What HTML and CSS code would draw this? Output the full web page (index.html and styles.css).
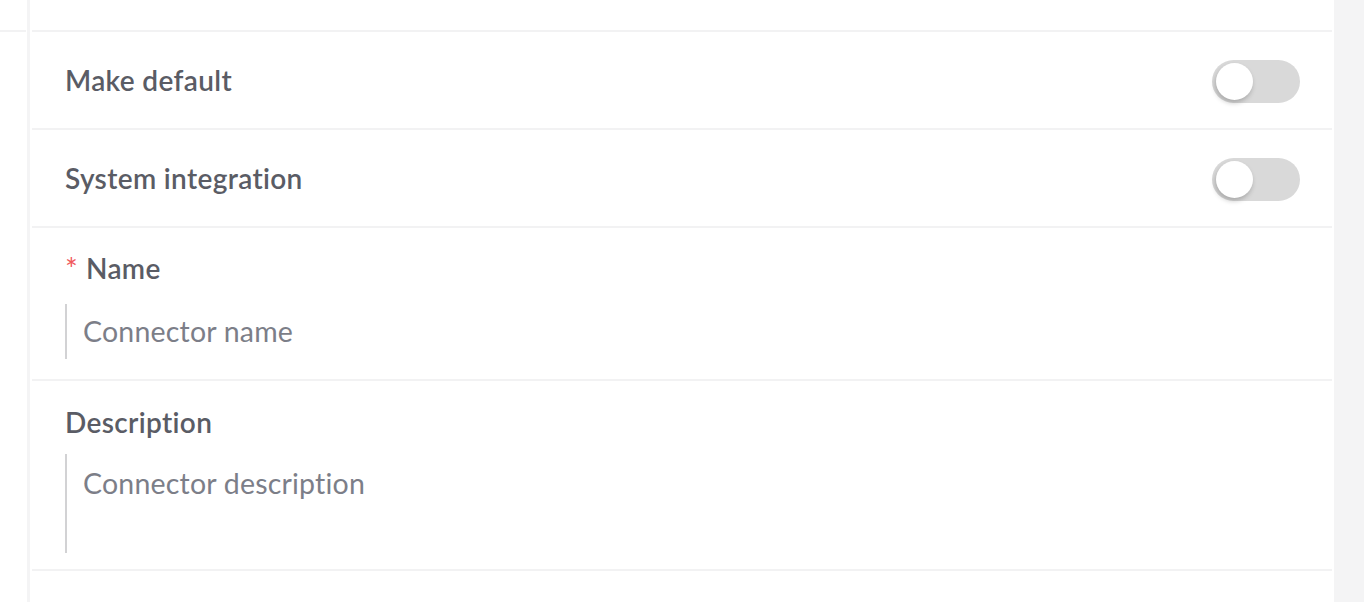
FILE: index.html
```html
<!DOCTYPE html>
<html lang="en">

<head>
    <meta charset="UTF-8">
    <meta name="viewport" content="width=device-width, initial-scale=1.0" />
    <title>Connector settings</title>
    <link rel="stylesheet" href="styles.css">
</head>

<body>
    <div class="layout">
        <!-- Narrow side panel on the left -->
        <div class="side">
            <div class="side-head"></div>
        </div>

        <!-- Connector form -->
        <div class="panel">
            <div class="panel-head"></div>

            <div class="row row-switch">
                <span class="row-label">Make default</span>
                <span class="toggle"><span class="knob"></span></span>
            </div>

            <div class="row row-switch">
                <span class="row-label">System integration</span>
                <span class="toggle"><span class="knob"></span></span>
            </div>

            <div class="row row-field">
                <label class="row-label" for="connector-name"><span class="required">*</span>Name</label>
                <input id="connector-name" class="field-input" type="text" placeholder="Connector name">
            </div>

            <div class="row row-field row-area">
                <label class="row-label" for="connector-desc">Description</label>
                <textarea id="connector-desc" class="field-area" placeholder="Connector description"></textarea>
            </div>
        </div>
    </div>
</body>

</html>
```

FILE: styles.css
```css
html,
body {
    margin: 0;
    height: 100%;
    background-color: #f4f4f5;
    font-family: Lato, "Open Sans", sans-serif;
}

.layout {
    display: flex;
    gap: 3px;
    height: 602px;
    overflow: hidden;
}

.side {
    width: 27px;
    background-color: #ffffff;
}

.side-head {
    height: 30px;
    margin-right: 1px;
    border-bottom: 2px solid #f2f2f3;
}

.panel {
    width: 1304px;
    background-color: #ffffff;
}

.panel-head {
    height: 30px;
    margin: 0 2px;
    border-bottom: 2px solid #f2f2f3;
}

.row {
    margin: 0 2px;
    padding-left: 33px;
    border-bottom: 2px solid #f2f2f3;
}

.row-label {
    display: block;
    height: 36px;
    font-size: 28px;
    font-weight: 600;
    line-height: 36px;
    letter-spacing: 0.35px;
    color: #5a5c65;
}

/* Rows with a switch on the right */
.row-switch {
    display: flex;
    align-items: center;
    justify-content: space-between;
    height: 96px;
    padding-right: 32px;
}

.toggle {
    position: relative;
    width: 88px;
    height: 43px;
    margin-top: 2px;
    border-radius: 22px;
    background-color: #d9d9d9;
}

.knob {
    position: absolute;
    top: 3px;
    left: 4px;
    width: 37px;
    height: 37px;
    border-radius: 50%;
    background-color: #ffffff;
    box-shadow: -1px 3px 5px rgba(0, 0, 0, 0.22);
}

/* Rows with a text field */
.row-field {
    padding-top: 22px;
    padding-bottom: 20px;
    padding-right: 33px;
}

.row-area {
    padding-top: 23px;
    padding-bottom: 16px;
}

.required {
    display: inline-block;
    width: 21px;
    font-size: 30px;
    font-weight: 400;
    line-height: 36px;
    color: #f0595c;
    vertical-align: top;
}

.field-input,
.field-area {
    display: block;
    box-sizing: border-box;
    width: 100%;
    margin: 18px 0 0;
    padding: 0 0 0 16px;
    border: none;
    border-left: 2px solid #d2d2d4;
    outline: none;
    background: transparent;
    font-family: Lato, "Open Sans", sans-serif;
    font-size: 28.5px;
    letter-spacing: 0.2px;
    color: #5a5c65;
}

.field-input {
    height: 55px;
    line-height: 55px;
}

.field-area {
    height: 99px;
    margin-top: 14px;
    padding-top: 11px;
    line-height: 36px;
    resize: none;
}

.field-input::placeholder,
.field-area::placeholder {
    color: #7c7e88;
}
```
